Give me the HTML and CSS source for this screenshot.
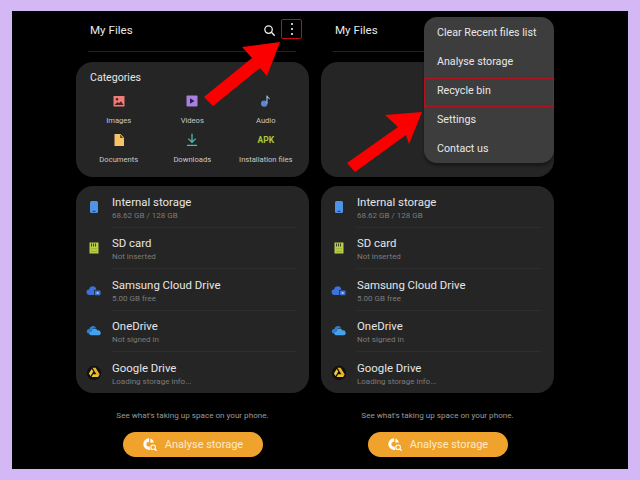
FILE: index.html
```html
<!DOCTYPE html>
<html lang="en">
<head>
  <meta charset="UTF-8" />
  <title>My Files - Recycle bin</title>
  <link rel="stylesheet" href="styles.css">
</head>
<body>
  <svg class="defs" width="0" height="0">
    <symbol id="i-phone" viewBox="0 0 18 18">
      <rect x="5" y="3" width="8" height="12" rx="1.5" fill="#4f93e6"/>
      <rect x="7.500" y="12.800" width="3" height="1" fill="#123a70"/>
    </symbol>
    <symbol id="i-sd" viewBox="0 0 18 18">
      <path d="M4.500 3.500h9v11h-9z" fill="#b7cf45"/>
      <path d="M6 4.500h1v3H6zM8 4.500h1v3H8zM10 4.500h1v3h-1z" fill="#3c4420"/>
      <path d="M6 9.500h6v.8H6zM6 12h6v.8H6z" fill="#8fa433"/>
    </symbol>
    <symbol id="i-samsung" viewBox="0 0 18 18">
      <path d="M4.500 14A2.700 2.700 0 0 1 4 8.600 3.800 3.800 0 0 1 11.200 7.500L10.500 9H9v5z" fill="#3f71dc"/>
      <rect x="9.700" y="9.500" width="5.800" height="4.800" rx="1" fill="#3f71dc"/>
      <rect x="11.700" y="11" width="1.800" height="1.800" fill="#b9cdf5"/>
    </symbol>
    <symbol id="i-onedrive" viewBox="0 0 18 18">
      <path d="M3 11.500A2.400 2.400 0 0 1 4.300 7 3.800 3.800 0 0 1 11.300 6 3 3 0 0 0 7 8.300 2.600 2.600 0 0 0 5.400 11.500z" fill="#2f7fd2"/>
      <path d="M5.800 13.300A2.100 2.100 0 0 1 6.400 9.200 3.200 3.200 0 0 1 12.500 8.400 2.500 2.500 0 0 1 13.800 13.300z" fill="#43a3ee"/>
    </symbol>
    <symbol id="i-gdrive" viewBox="0 0 18 18">
      <circle cx="9" cy="9" r="7.200" fill="#111"/>
      <path d="M7.400 3.800h3.200l4.100 6.700h-3.200z" fill="#e9b52f"/>
      <path d="M6.700 4.900l1.600 2.700-2.700 4.500-1.700-2.700z" fill="#f5c83a"/>
      <path d="M6.500 12.900l1.600-2.700h6.600l-1.600 2.700z" fill="#f2c230"/>
    </symbol>
  </svg>

  <div class="frame">
    <section class="phone">
      <header class="app-head">
        <span class="app-title">My Files</span>
        <span class="app-actions">
          <svg class="action-icon" viewBox="0 0 14 14"><circle cx="6" cy="6" r="4" fill="none" stroke="#eee" stroke-width="1.4"/><path d="M9 9l3.6 3.6" stroke="#eee" stroke-width="1.5"/></svg>
          <span class="more-btn"><i></i><i></i><i></i></span>
        </span>
      </header>

      <div class="card categories">
        <h3>Categories</h3>
        <div class="cat-grid">
          <div class="cat">
            <svg class="cat-icon" viewBox="0 0 14 14"><rect x="1.500" y="2" width="11" height="10.500" fill="#ee7c78"/><circle cx="5" cy="5.200" r="1.200" fill="#4a2020"/><path d="M2.500 11l3-3 1.500 1.300 2-2 2.500 3.700z" fill="#4a2020"/></svg>
            <span>Images</span>
          </div>
          <div class="cat">
            <svg class="cat-icon" viewBox="0 0 14 14"><rect x="1.500" y="1.500" width="11" height="11" rx="1" fill="#a880e0"/><path d="M5 4.200l4.500 2.800-4.500 2.800z" fill="#2c1e4a"/></svg>
            <span>Videos</span>
          </div>
          <div class="cat">
            <svg class="cat-icon" viewBox="0 0 14 14"><circle cx="5.200" cy="9.600" r="3.200" fill="#5b86d6"/><path d="M7.400 9.600V1.500h1c.3 1.700 2.600 2 2.600 4-.8-.9-1.700-1.100-2.500-1.200v5.300z" fill="#9db9ea"/></svg>
            <span>Audio</span>
          </div>
          <div class="cat">
            <svg class="cat-icon" viewBox="0 0 14 14"><path d="M2.500 1h6l3.500 3.500V13h-9.500z" fill="#f5c468"/><path d="M8 1.500V5h3.500z" fill="#6e5222"/></svg>
            <span>Documents</span>
          </div>
          <div class="cat">
            <svg class="cat-icon" viewBox="0 0 14 14"><path d="M7 .8v8.400M3.300 5.600L7 9.300l3.700-3.700M2 12.400h10" fill="none" stroke="#52b7b0" stroke-width="1.300"/></svg>
            <span>Downloads</span>
          </div>
          <div class="cat">
            <b class="apk">APK</b>
            <span>Installation files</span>
          </div>
        </div>
      </div>

      <div class="card storage">
        <div class="row">
          <svg class="row-icon"><use href="#i-phone"/></svg>
          <div class="row-text"><p>Internal storage</p><small>68.62 GB / 128 GB</small></div>
        </div>
        <div class="row">
          <svg class="row-icon"><use href="#i-sd"/></svg>
          <div class="row-text"><p>SD card</p><small>Not inserted</small></div>
        </div>
        <div class="row">
          <svg class="row-icon"><use href="#i-samsung"/></svg>
          <div class="row-text"><p>Samsung Cloud Drive</p><small>5.00 GB free</small></div>
        </div>
        <div class="row">
          <svg class="row-icon"><use href="#i-onedrive"/></svg>
          <div class="row-text"><p>OneDrive</p><small>Not signed in</small></div>
        </div>
        <div class="row">
          <svg class="row-icon"><use href="#i-gdrive"/></svg>
          <div class="row-text"><p>Google Drive</p><small>Loading storage info...</small></div>
        </div>
      </div>

      <p class="hint">See what's taking up space on your phone.</p>
      <div class="analyse-btn">
        <svg class="analyse-icon" viewBox="0 0 18 18"><path d="M8 1.500a6.500 6.500 0 1 0 1.500 12.800l-1-3.600A2.700 2.700 0 1 1 8 5.500z" fill="#fff"/><path d="M9.500 1.800a6.500 6.500 0 0 1 4 4.200l-4 .5z" fill="#fff"/><circle cx="12.500" cy="11.500" r="2.600" fill="none" stroke="#fff" stroke-width="1.200"/><path d="M14.500 13.500l2 2" stroke="#fff" stroke-width="1.300"/></svg>
        <span>Analyse storage</span>
      </div>
    </section>

    <section class="phone">
      <header class="app-head">
        <span class="app-title">My Files</span>
      </header>

      <div class="card categories"></div>

      <div class="card storage">
        <div class="row">
          <svg class="row-icon"><use href="#i-phone"/></svg>
          <div class="row-text"><p>Internal storage</p><small>68.62 GB / 128 GB</small></div>
        </div>
        <div class="row">
          <svg class="row-icon"><use href="#i-sd"/></svg>
          <div class="row-text"><p>SD card</p><small>Not inserted</small></div>
        </div>
        <div class="row">
          <svg class="row-icon"><use href="#i-samsung"/></svg>
          <div class="row-text"><p>Samsung Cloud Drive</p><small>5.00 GB free</small></div>
        </div>
        <div class="row">
          <svg class="row-icon"><use href="#i-onedrive"/></svg>
          <div class="row-text"><p>OneDrive</p><small>Not signed in</small></div>
        </div>
        <div class="row">
          <svg class="row-icon"><use href="#i-gdrive"/></svg>
          <div class="row-text"><p>Google Drive</p><small>Loading storage info...</small></div>
        </div>
      </div>

      <p class="hint">See what's taking up space on your phone.</p>
      <div class="analyse-btn">
        <svg class="analyse-icon" viewBox="0 0 18 18"><path d="M8 1.500a6.500 6.500 0 1 0 1.500 12.800l-1-3.600A2.700 2.700 0 1 1 8 5.500z" fill="#fff"/><path d="M9.500 1.800a6.500 6.500 0 0 1 4 4.200l-4 .5z" fill="#fff"/><circle cx="12.500" cy="11.500" r="2.600" fill="none" stroke="#fff" stroke-width="1.200"/><path d="M14.500 13.500l2 2" stroke="#fff" stroke-width="1.300"/></svg>
        <span>Analyse storage</span>
      </div>

      <ul class="menu">
        <li>Clear Recent files list</li>
        <li>Analyse storage</li>
        <li class="marked">Recycle bin</li>
        <li>Settings</li>
        <li>Contact us</li>
      </ul>
    </section>

    <svg class="arrows" viewBox="0 0 640 480" width="640" height="480">
      <polygon points="280,42 242,47 252,58 204,97 213,106 260,68 267,76" fill="#fb0000"/>
      <polygon points="422,112 385,115 398,127 347,163 355,172 406,135 409,144" fill="#fb0000"/>
    </svg>
  </div>
</body>
</html>
```

FILE: styles.css
```css
body {
  margin: 0;
  width: 640px;
  height: 480px;
  background: #d4b8f6;
  font-family: Roboto, "Liberation Sans", sans-serif;
  overflow: hidden;
}
.defs {
  position: absolute;
}
.frame {
  display: flex;
  gap: 12px;
  box-sizing: border-box;
  width: 616px;
  height: 458px;
  margin: 11px 12px;
  padding-left: 64px;
  background: #000;
}
.phone {
  position: relative;
  width: 233px;
  display: flex;
  flex-direction: column;
}
.app-head {
  display: flex;
  align-items: center;
  justify-content: space-between;
  height: 38px;
  margin: 0 13px 0 12px;
  padding: 0 2px 2px;
  border-bottom: 1px solid #222;
}
.app-title {
  color: #e8e8e8;
  font-size: 11.600px;
}
.app-actions {
  display: flex;
  align-items: center;
  gap: 5px;
  margin-right: -8px;
}
.action-icon {
  width: 13px;
  height: 13px;
}
.more-btn {
  display: flex;
  flex-direction: column;
  align-items: center;
  justify-content: center;
  gap: 3px;
  box-sizing: border-box;
  width: 21px;
  height: 20px;
  margin-top: -2px;
  border: 1.500px solid #c40c1c;
  border-radius: 2px;
}
.more-btn i {
  width: 2px;
  height: 2px;
  background: #fff;
  border-radius: 50%;
}
.card {
  background: #252525;
  border-radius: 17px;
}
.categories {
  box-sizing: border-box;
  height: 115px;
  margin-top: 10px;
  padding: 9px 6px 0;
}
.categories h3 {
  margin: 0 0 0 8px;
  color: #e6e6e6;
  font-size: 10.600px;
  font-weight: 400;
  line-height: 13px;
}
.cat-grid {
  display: grid;
  grid-template-columns: repeat(3, 73.500px);
  grid-auto-rows: 39px;
  margin-top: 10px;
}
.cat {
  display: flex;
  flex-direction: column;
  align-items: center;
  color: #c8c8c8;
  font-size: 7.600px;
  line-height: 10px;
}
.cat-icon {
  width: 14px;
  height: 14px;
  margin-bottom: 7.500px;
}
.apk {
  height: 14px;
  margin-bottom: 7.500px;
  color: #a9cb3e;
  font-size: 8.500px;
  line-height: 14px;
}
.storage {
  height: 207px;
  margin-top: 9px;
  padding: 0 13px 0 9px;
  box-sizing: border-box;
}
.row {
  display: flex;
  align-items: center;
  height: 41.500px;
}
.row-icon {
  width: 18px;
  height: 18px;
  margin-right: 9px;
  flex: none;
}
.row-text {
  flex: 1;
  height: 100%;
  display: flex;
  flex-direction: column;
  justify-content: center;
  padding-top: 3px;
  border-bottom: 1px solid #2f2f2f;
  box-sizing: border-box;
}
.row:last-child .row-text {
  border-bottom: none;
}
.row-text p {
  margin: 0;
  color: #e6e6e6;
  font-size: 11.400px;
  line-height: 15px;
}
.row-text small {
  color: #7c7c7c;
  font-size: 8px;
  line-height: 11px;
}
.hint {
  margin: 17px 0 0;
  color: #9a9a9a;
  font-size: 8.100px;
  line-height: 11px;
  text-align: center;
}
.analyse-btn {
  display: flex;
  align-items: center;
  justify-content: center;
  gap: 7px;
  align-self: center;
  width: 140px;
  height: 25px;
  margin-top: 11.300px;
  background: #f0a32c;
  border-radius: 13px;
  color: #fdeacb;
  font-size: 11px;
}
.analyse-icon {
  width: 16px;
  height: 16px;
}
.menu {
  position: absolute;
  top: 6px;
  right: 0;
  width: 130px;
  height: 146px;
  margin: 0;
  padding: 0.500px 0 0;
  list-style: none;
  box-sizing: border-box;
  background: #3d3d3d;
  border-radius: 13px;
  box-shadow: 0 3px 3px rgba(0, 0, 0, 0.35);
}
.menu li {
  position: relative;
  height: 29.200px;
  padding-left: 13px;
  color: #e8e8e8;
  font-size: 10.700px;
  line-height: 29.200px;
}
.menu .marked::after {
  content: "";
  position: absolute;
  top: 2.500px;
  left: 0;
  right: 0;
  height: 29px;
  box-sizing: border-box;
  border: 1.500px solid #b01420;
}
.arrows {
  position: absolute;
  top: 0;
  left: 0;
  pointer-events: none;
}
```
